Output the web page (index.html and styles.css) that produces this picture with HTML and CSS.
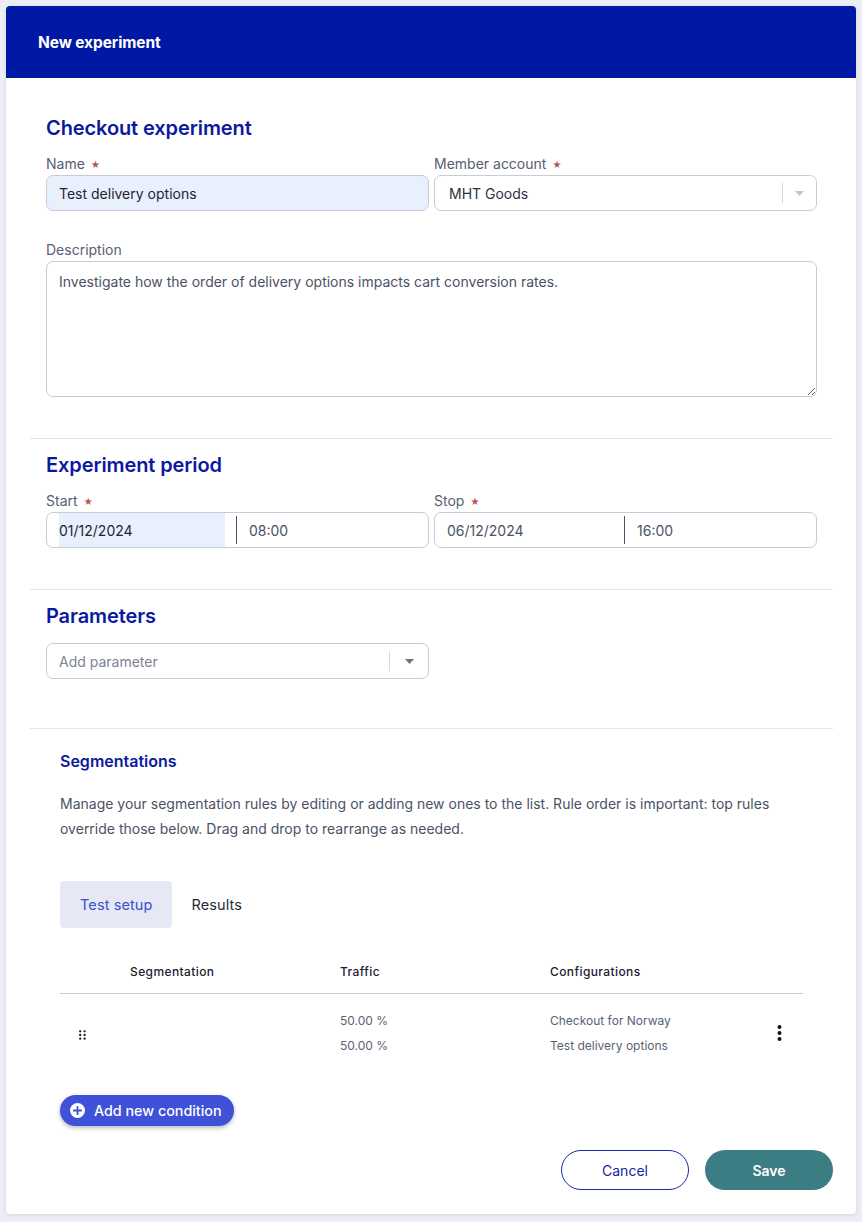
FILE: index.html
```html
<!DOCTYPE html>
<html lang="en">
<head>
<meta charset="utf-8">
<title>New experiment</title>
<link rel="stylesheet" href="styles.css">
</head>
<body>
<div class="card">
  <header class="card-header">
    <h1>New experiment</h1>
  </header>
  <div class="card-body">
    <section class="section">
      <h2 class="section-title">Checkout experiment</h2>
      <div class="grid-two">
        <div class="field">
          <label class="label">Name <span class="req">★</span></label>
          <div class="control filled"><span class="value">Test delivery options</span></div>
        </div>
        <div class="field">
          <label class="label">Member account <span class="req">★</span></label>
          <div class="control select">
            <span class="value dark">MHT Goods</span>
            <span class="select-sep"></span>
            <span class="caret-box"><svg class="caret light" width="9" height="5" viewBox="0 0 9 5"><path d="M0 0h9L4.5 5z"/></svg></span>
          </div>
        </div>
      </div>
      <div class="field field-desc">
        <label class="label">Description</label>
        <textarea class="textarea">Investigate how the order of delivery options impacts cart conversion rates.</textarea>
      </div>
    </section>
    <hr class="divider">
    <section class="section">
      <h2 class="section-title">Experiment period</h2>
      <div class="grid-two">
        <div class="field">
          <label class="label">Start <span class="req">★</span></label>
          <div class="control datetime">
            <span class="date-part selected">01/12/2024</span>
            <span class="dt-sep"></span>
            <span class="time-part">08:00</span>
          </div>
        </div>
        <div class="field">
          <label class="label">Stop <span class="req">★</span></label>
          <div class="control datetime">
            <span class="date-part">06/12/2024</span>
            <span class="dt-sep"></span>
            <span class="time-part">16:00</span>
          </div>
        </div>
      </div>
    </section>
    <hr class="divider">
    <section class="section section-params">
      <h2 class="section-title">Parameters</h2>
      <div class="grid-two">
        <div class="control select">
          <span class="value placeholder">Add parameter</span>
          <span class="select-sep"></span>
          <span class="caret-box wide"><svg class="caret" width="9" height="5" viewBox="0 0 9 5"><path d="M0 0h9L4.5 5z"/></svg></span>
        </div>
      </div>
    </section>
    <hr class="divider">
    <section class="segments">
      <h3 class="segments-title">Segmentations</h3>
      <p class="segments-text">Manage your segmentation rules by editing or adding new ones to the list. Rule order is important: top rules override those below. Drag and drop to rearrange as needed.</p>
      <div class="tabs">
        <button class="tab active">Test setup</button>
        <button class="tab">Results</button>
      </div>
      <div class="table">
        <div class="thead">
          <div class="th"></div>
          <div class="th">Segmentation</div>
          <div class="th">Traffic</div>
          <div class="th">Configurations</div>
          <div class="th"></div>
        </div>
        <div class="trow">
          <div class="td td-drag">
            <svg width="7" height="10" viewBox="0 0 7 10"><circle cx="1.2" cy="1.3" r="1.15"/><circle cx="5.6" cy="1.3" r="1.15"/><circle cx="1.2" cy="5" r="1.15"/><circle cx="5.6" cy="5" r="1.15"/><circle cx="1.2" cy="8.7" r="1.15"/><circle cx="5.6" cy="8.7" r="1.15"/></svg>
          </div>
          <div class="td"></div>
          <div class="td td-lines"><span>50.00 %</span><span>50.00 %</span></div>
          <div class="td td-lines"><span>Checkout for Norway</span><span>Test delivery options</span></div>
          <div class="td td-menu">
            <svg width="5" height="16" viewBox="0 0 5 16"><circle cx="2.5" cy="2" r="2"/><circle cx="2.5" cy="8" r="2"/><circle cx="2.5" cy="14" r="2"/></svg>
          </div>
        </div>
      </div>
      <button class="add-btn">
        <svg width="15" height="15" viewBox="0 0 15 15"><circle cx="7.5" cy="7.5" r="7.5" fill="#fff"/><path d="M7.5 3.8v7.4M3.8 7.5h7.4" stroke="#3f51d6" stroke-width="1.8" stroke-linecap="round"/></svg>
        <span>Add new condition</span>
      </button>
    </section>
    <div class="footer">
      <button class="btn btn-outline">Cancel</button>
      <button class="btn btn-primary">Save</button>
    </div>
  </div>
</div>
</body>
</html>
```
FILE: styles.css
```css
* { box-sizing: border-box; }

html, body {
  margin: 0;
  padding: 0;
}

body {
  background: #eceef5;
  padding: 6px;
  font-family: Inter, "Noto Sans", "Liberation Sans", sans-serif;
  color: #1f2430;
}

.card {
  width: 850px;
  background: #ffffff;
  border-radius: 4px;
  box-shadow: 0 1px 4px rgba(20, 30, 70, 0.12);
  overflow: hidden;
}

.card-header {
  height: 72px;
  background: #0019a5;
  display: flex;
  align-items: center;
  padding: 0 32px;
}

.card-header h1 {
  margin: 0;
  font-size: 15.5px;
  font-weight: 700;
  color: #ffffff;
  letter-spacing: -0.1px;
}

.card-body {
  padding: 24px 23px 24px 24px;
}

.section {
  padding: 12px 16px 41px;
}

.section-params {
  padding-bottom: 49px;
}

.section-title {
  margin: 0 0 13px;
  font-size: 20px;
  line-height: 28px;
  font-weight: 600;
  color: #0a1a9f;
  letter-spacing: -0.1px;
}

.divider {
  margin: 0;
  border: 0;
  border-top: 1px solid #e3e5eb;
}

.grid-two {
  display: grid;
  grid-template-columns: 1fr 1fr;
  gap: 5px;
}

.field {
  display: flex;
  flex-direction: column;
}

.field-desc {
  margin-top: 30px;
}

.label {
  display: block;
  height: 18px;
  font-size: 14px;
  line-height: 18px;
  color: #565e70;
  margin-bottom: 2px;
}

.req {
  color: #b4544c;
  font-size: 9px;
  line-height: 1;
  vertical-align: 1px;
  margin-left: 2px;
}

.control {
  height: 36px;
  border: 1px solid #c9cbd7;
  border-radius: 7px;
  display: flex;
  align-items: center;
  font-size: 14px;
  background: #ffffff;
  overflow: hidden;
}

.control.filled {
  background: #e8f0fd;
}

.value {
  padding-left: 12px;
  color: #1f2430;
  flex: 1;
}

.value.dark {
  padding-left: 14px;
  color: #2b3140;
}

.value.placeholder {
  color: #7c8394;
}

.select-sep {
  width: 1px;
  height: 20px;
  background: #d6d8e0;
}

.caret-box {
  width: 33px;
  display: flex;
  justify-content: center;
  align-items: center;
}

.caret-box.wide {
  width: 38px;
}

.caret {
  fill: #6b7283;
}

.caret.light {
  fill: #c3c6cf;
}

.textarea {
  display: block;
  width: 100%;
  height: 136px;
  border: 1px solid #c9cbd7;
  border-radius: 7px;
  padding: 10px 12px;
  font-family: inherit;
  font-size: 14px;
  line-height: 20px;
  color: #4b5265;
  background: #ffffff;
  outline: none;
}

.datetime {
  padding-left: 12px;
}

.date-part {
  width: 166px;
  height: 100%;
  display: flex;
  align-items: center;
  color: #4b5265;
}

.date-part.selected {
  background: #e8f0fd;
  color: #1f2430;
}

.dt-sep {
  width: 1px;
  height: 28px;
  background: #4b5060;
  margin: 0 12px 0 11px;
}

.time-part {
  color: #4b5265;
}

.segments {
  padding: 20px 30px 0;
}

.segments-title {
  margin: 0;
  font-size: 16px;
  line-height: 24px;
  font-weight: 600;
  color: #0a1a9f;
}

.segments-text {
  margin: 18px 0 0;
  font-size: 14px;
  line-height: 25px;
  color: #4b5265;
}

.tabs {
  display: flex;
  margin-top: 40px;
}

.tab {
  height: 47px;
  padding: 0 20px;
  border: 0;
  border-radius: 4px;
  background: transparent;
  font-family: inherit;
  font-size: 14.5px;
  color: #262b3a;
  letter-spacing: 0.1px;
}

.tab.active {
  background: #e6e8f5;
  color: #3c4fcf;
}

.tab + .tab {
  padding-left: 19px;
}

.table {
  margin-top: 21px;
}

.thead,
.trow {
  display: grid;
  grid-template-columns: 70px 210px 210px 205px 48px;
}

.thead {
  height: 45px;
  align-items: center;
  border-bottom: 1px solid #c9cbd4;
}

.th {
  font-size: 12px;
  font-weight: 500;
  letter-spacing: 0.4px;
  color: #1c2131;
}

.trow {
  padding: 14px 0 16px;
  align-items: center;
}

.td-drag {
  padding-left: 19px;
  display: flex;
  align-items: center;
  fill: #15181f;
  padding-top: 3px;
}

.td-lines {
  display: flex;
  flex-direction: column;
  font-size: 12px;
  line-height: 25px;
  color: #5a6275;
}

.td-menu {
  display: flex;
  justify-content: center;
  fill: #111318;
}

.add-btn {
  margin-top: 21px;
  height: 31px;
  display: inline-flex;
  align-items: center;
  gap: 9px;
  padding: 0 12px 0 10px;
  border: 0;
  border-radius: 16px;
  background: #3f51d6;
  color: #ffffff;
  font-family: inherit;
  font-size: 14.3px;
  font-weight: 500;
  box-shadow: 0 2px 4px rgba(20, 25, 60, 0.3);
}

.footer {
  display: flex;
  justify-content: flex-end;
  gap: 16px;
  margin-top: 24px;
}

.btn {
  width: 128px;
  height: 40px;
  border-radius: 20px;
  font-family: inherit;
  font-size: 14px;
}

.btn-outline {
  background: #ffffff;
  border: 1px solid #1a2aa6;
  color: #1326a3;
}

.btn-primary {
  background: #3c7d84;
  border: 0;
  color: #ffffff;
  font-weight: 600;
}
```
